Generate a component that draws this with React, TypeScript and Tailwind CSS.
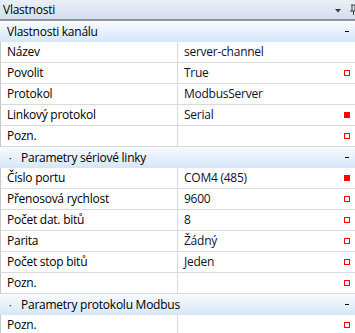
import React from "react";

type Mark = "none" | "filled" | "empty";

type Row =
  | { kind: "cat"; label: string; bullet?: boolean }
  | { kind: "prop"; label: string; value: string; mark: Mark };

const rows: Row[] = [
  { kind: "cat", label: "Vlastnosti kanálu" },
  { kind: "prop", label: "Název", value: "server-channel", mark: "none" },
  { kind: "prop", label: "Povolit", value: "True", mark: "empty" },
  { kind: "prop", label: "Protokol", value: "ModbusServer", mark: "none" },
  { kind: "prop", label: "Linkový protokol", value: "Serial", mark: "filled" },
  { kind: "prop", label: "Pozn.", value: "", mark: "empty" },
  { kind: "cat", label: "Parametry sériové linky", bullet: true },
  { kind: "prop", label: "Číslo portu", value: "COM4 (485)", mark: "filled" },
  { kind: "prop", label: "Přenosová rychlost", value: "9600", mark: "empty" },
  { kind: "prop", label: "Počet dat. bitů", value: "8", mark: "empty" },
  { kind: "prop", label: "Parita", value: "Žádný", mark: "empty" },
  { kind: "prop", label: "Počet stop bitů", value: "Jeden", mark: "empty" },
  { kind: "prop", label: "Pozn.", value: "", mark: "empty" },
  { kind: "cat", label: "Parametry protokolu Modbus", bullet: true },
  { kind: "prop", label: "Pozn.", value: "", mark: "empty" },
];

const Marker = ({ mark }: { mark: Mark }) => {
  if (mark === "filled") return <div className="w-[6px] h-[6px] bg-[#ff0000]" />;
  if (mark === "empty") return <div className="w-[6px] h-[6px] border border-[#ff0000] bg-white" />;
  return null;
};

const App = () => {
  return (
    <div
      className="w-[355px] h-[333px] overflow-hidden bg-white text-[12px] text-black tracking-[-0.25px]"
      style={{ fontFamily: '"Open Sans", "Noto Sans", sans-serif' }}
    >
      {/* title bar */}
      <div className="flex items-center h-[21px] pl-[3px] border-b-2 border-[#8e939c] bg-gradient-to-b from-[#eaeff7] to-[#d3deee]">
        <span className="flex-1 leading-none">Vlastnosti</span>
        <svg width="6" height="4" viewBox="0 0 6 4" className="mr-[9px] mt-[2px]">
          <path d="M0 0 L6 0 L3 3.5 Z" fill="#3c3c3c" />
        </svg>
        <svg width="7" height="12" viewBox="0 0 7 12" className="-mr-[2px]">
          <path d="M1 1 H6 M2 1 V7 M5 1 V7 M0 7 H7 M3.5 7 V11" stroke="#3c3c3c" strokeWidth="1" fill="none" />
        </svg>
      </div>

      {rows.map((row, i) =>
        row.kind === "cat" ? (
          <div
            key={i}
            className="flex items-center h-[21px] bg-gradient-to-b from-[#f8fbff] to-[#d6e6f8]"
          >
            {row.bullet ? (
              <>
                <span className="w-[21px] pl-[9px] text-[10px] leading-none">·</span>
                <span className="flex-1 leading-none">{row.label}</span>
              </>
            ) : (
              <span className="flex-1 pl-[7px] leading-none">{row.label}</span>
            )}
            <div className="w-[4px] h-[1px] bg-black mr-[6px]" />
          </div>
        ) : (
          <div key={i} className="flex h-[21px] border-b border-[#d9d9d9] border-l border-l-[#c8c8c8]">
            <div className="flex items-center w-[177px] pl-[6px] border-r border-[#d9d9d9]">
              <span className="leading-none">{row.label}</span>
            </div>
            <div className="flex flex-1 items-center pl-[6px] pr-[5px]">
              <span className="flex-1 leading-none text-[#101030]">{row.value}</span>
              <Marker mark={row.mark} />
            </div>
          </div>
        )
      )}
    </div>
  );
};

export default App;
